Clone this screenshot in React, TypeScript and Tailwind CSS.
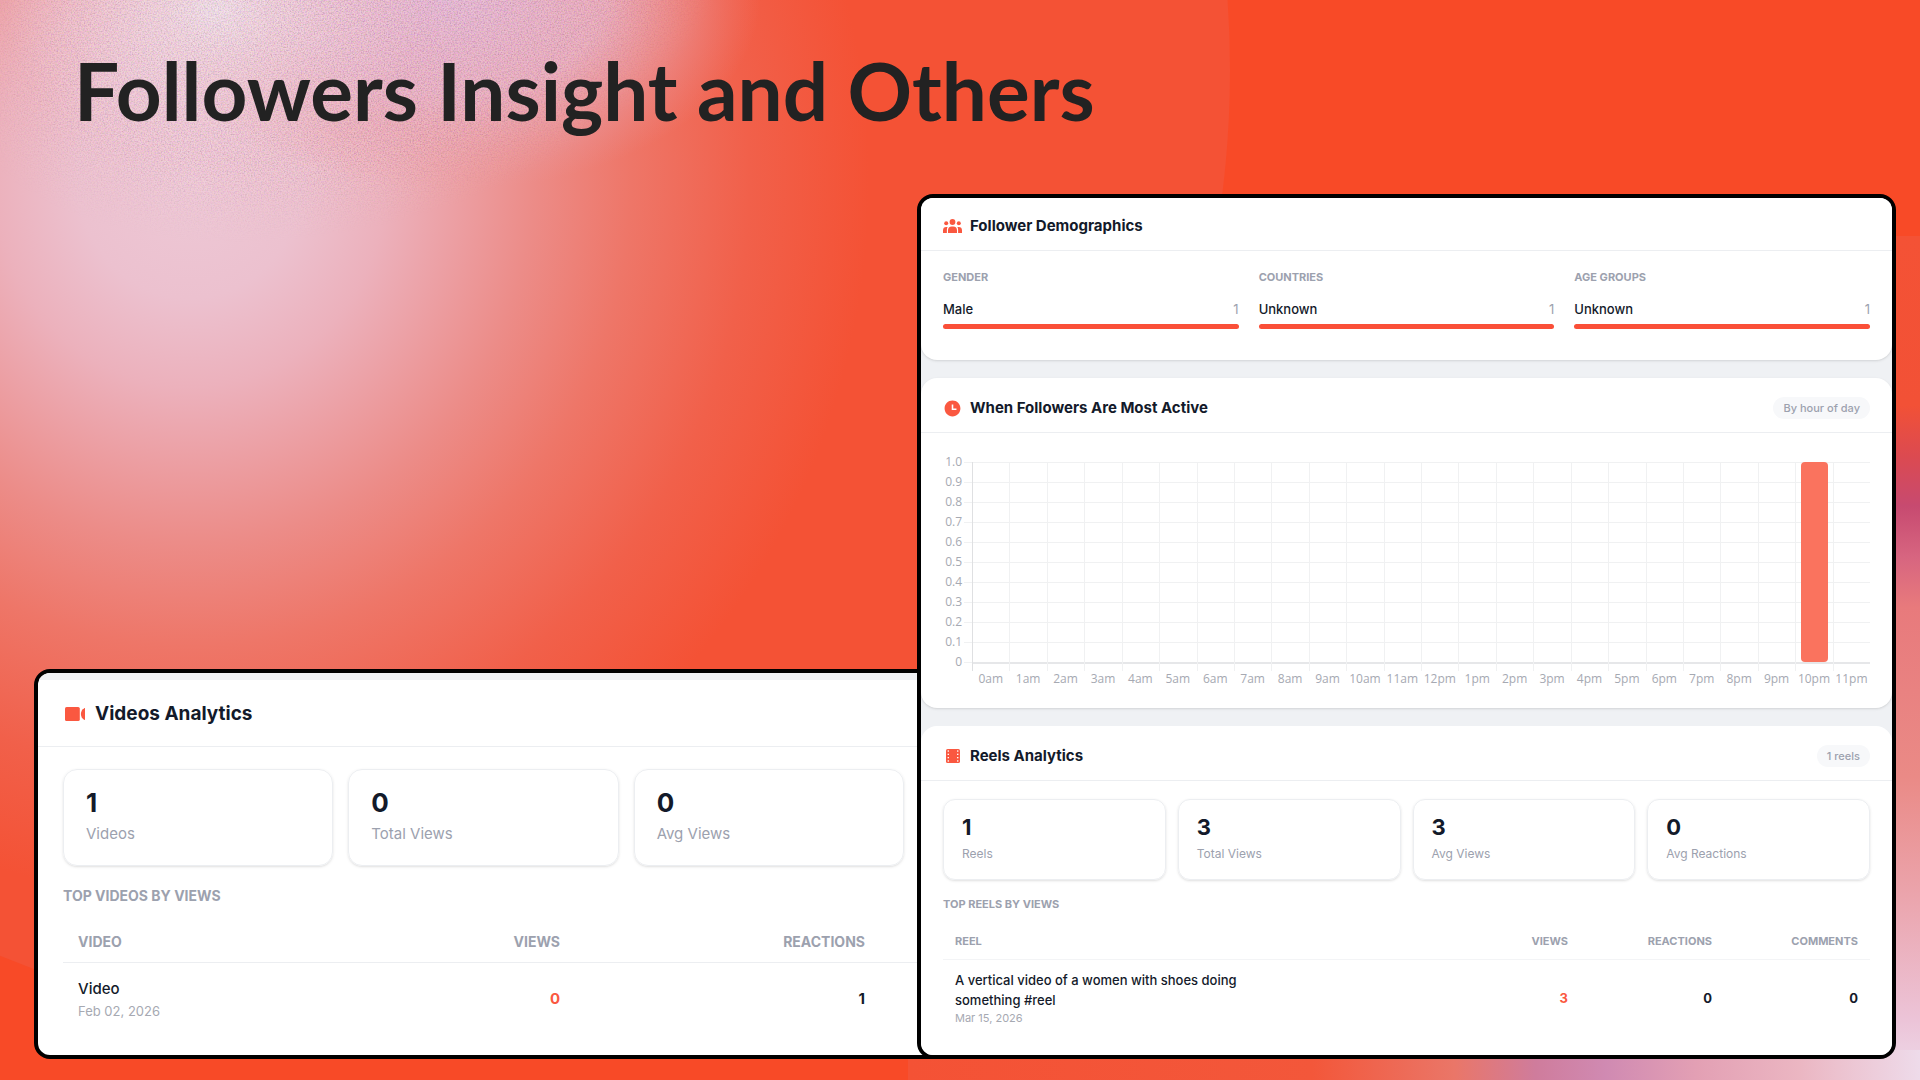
import React from 'react';
import { RiTimeFill } from 'react-icons/ri';

const hours = Array.from({ length: 24 }, (_, i) => ({
  label: i < 12 ? `${i}am` : `${i === 12 ? 12 : i - 12}pm`,
  value: i === 22 ? 1 : 0,
}));

const ticks = ['1.0', '0.9', '0.8', '0.7', '0.6', '0.5', '0.4', '0.3', '0.2', '0.1', '0'];

const demographics = [
  { title: 'Gender', label: 'Male', count: 1 },
  { title: 'Countries', label: 'Unknown', count: 1 },
  { title: 'Age Groups', label: 'Unknown', count: 1 },
];

const reelStats = [
  { value: 1, label: 'Reels' },
  { value: 3, label: 'Total Views' },
  { value: 3, label: 'Avg Views' },
  { value: 0, label: 'Avg Reactions' },
];

const videoStats = [
  { value: 1, label: 'Videos' },
  { value: 0, label: 'Total Views' },
  { value: 0, label: 'Avg Views' },
];

function TeamIcon() {
  return (
    <svg className="h-[14px] w-[19px]" viewBox="0 0 19 14" fill="currentColor" aria-hidden="true">
      <circle cx="9.5" cy="3" r="2.9" />
      <circle cx="3.2" cy="4.3" r="2" />
      <circle cx="15.8" cy="4.3" r="2" />
      <path d="M5 14v-2.8a3.8 3.8 0 0 1 3.8-3.8h1.4a3.8 3.8 0 0 1 3.8 3.8V14z" />
      <path d="M0 14v-2.6A3.4 3.4 0 0 1 3.4 8h1.2a5.6 5.6 0 0 0-.7 3.2V14z" />
      <path d="M19 14v-2.6A3.4 3.4 0 0 0 15.6 8h-1.2a5.6 5.6 0 0 1 .7 3.2V14z" />
    </svg>
  );
}

function VideoIcon() {
  return (
    <svg className="h-[14px] w-5" viewBox="0 0 20 14" fill="currentColor" aria-hidden="true">
      <rect width="14.8" height="14" rx="1.6" />
      <path d="M20 1.6v10.8c0 .5-.5.6-.9.4-1.9-1-3.2-3.2-3.2-5.8s1.3-4.8 3.2-5.8c.4-.2.9-.1.9.4z" />
    </svg>
  );
}

function FilmIcon() {
  return (
    <svg className="h-[14px] w-[14px]" viewBox="0 0 14 14" aria-hidden="true">
      <rect width="14" height="14" rx="1.6" fill="currentColor" />
      {[1.4, 4.7, 8, 11.3].map((y) => (
        <g key={y} fill="#fff">
          <rect x="1.6" y={y} width="1.4" height="1.3" />
          <rect x="11" y={y} width="1.4" height="1.3" />
        </g>
      ))}
    </svg>
  );
}

function Backdrop() {
  return (
    <svg
      className="absolute inset-0 h-full w-full"
      viewBox="0 0 1920 1080"
      preserveAspectRatio="none"
      aria-hidden="true"
    >
      <defs>
        <radialGradient id="glow" gradientUnits="userSpaceOnUse" cx="0" cy="0" r="1" gradientTransform="translate(190 180) scale(700 740)">
          <stop offset="0" stopColor="#edc8d6" />
          <stop offset="0.16" stopColor="#ecc1cf" />
          <stop offset="0.28" stopColor="#ecb1bc" />
          <stop offset="0.37" stopColor="#eca1a6" />
          <stop offset="0.49" stopColor="#ec8c88" />
          <stop offset="0.63" stopColor="#ee7668" />
          <stop offset="0.8" stopColor="#f1604a" />
          <stop offset="0.97" stopColor="#f45235" />
        </radialGradient>
        <radialGradient id="white" gradientUnits="userSpaceOnUse" cx="0" cy="0" r="1" gradientTransform="translate(215 10) scale(210 150)">
          <stop offset="0" stopColor="#eee0ea" />
          <stop offset="1" stopColor="#eed0de" stopOpacity="0" />
        </radialGradient>
        <radialGradient id="lilac" gradientUnits="userSpaceOnUse" cx="0" cy="0" r="1" gradientTransform="translate(450 0) scale(310 190)">
          <stop offset="0" stopColor="#e2b6d4" />
          <stop offset="0.5" stopColor="#e6b0c6" stopOpacity="0.85" />
          <stop offset="1" stopColor="#ea98a0" stopOpacity="0" />
        </radialGradient>
        <radialGradient id="grainFade" gradientUnits="userSpaceOnUse" cx="0" cy="0" r="1" gradientTransform="translate(340 0) rotate(-14) scale(400 230)">
          <stop offset="0" stopColor="#fff" />
          <stop offset="0.7" stopColor="#fff" stopOpacity="0.8" />
          <stop offset="1" stopColor="#fff" stopOpacity="0" />
        </radialGradient>
        <linearGradient id="side" x1="0" y1="0" x2="0" y2="1">
          <stop offset="0" stopColor="#f45235" />
          <stop offset="0.2" stopColor="#f25136" />
          <stop offset="0.26" stopColor="#dc4a50" />
          <stop offset="0.32" stopColor="#c74a70" />
          <stop offset="0.38" stopColor="#d76580" />
          <stop offset="0.44" stopColor="#e87a7c" />
          <stop offset="0.64" stopColor="#ea8a86" />
          <stop offset="0.78" stopColor="#eba4ac" />
          <stop offset="0.93" stopColor="#ecc4d8" />
          <stop offset="1" stopColor="#eedbea" />
        </linearGradient>
        <linearGradient id="floor" x1="0" y1="0" x2="1" y2="0">
          <stop offset="0" stopColor="#f45235" />
          <stop offset="0.4" stopColor="#f3573a" />
          <stop offset="0.54" stopColor="#ea7668" />
          <stop offset="0.62" stopColor="#cf7c9c" />
          <stop offset="0.69" stopColor="#d08ab2" />
          <stop offset="0.78" stopColor="#e3a0b4" />
          <stop offset="0.88" stopColor="#ebb6c2" />
          <stop offset="1" stopColor="#eedbea" />
        </linearGradient>
        <mask id="grainMask">
          <rect width="800" height="260" fill="url(#grainFade)" />
        </mask>
        <filter id="grain" x="0" y="0" width="100%" height="100%" colorInterpolationFilters="sRGB">
          <feTurbulence type="fractalNoise" baseFrequency="0.7" numOctaves="2" seed="4" />
          <feColorMatrix values="2 0 0 0 -0.1  1 1.4 0 0 -0.5  0.8 0 1.4 0 -0.35  0 0 0 0 1" />
        </filter>
      </defs>
      <rect width="1920" height="1080" fill="#f84a27" />
      <ellipse cx="330" cy="70" rx="900" ry="952" fill="#f45235" />
      <rect width="900" height="940" fill="url(#glow)" />
      <rect width="800" height="200" fill="url(#lilac)" />
      <rect width="440" height="180" fill="url(#white)" />
      <g mask="url(#grainMask)" opacity="0.2">
        <rect width="800" height="260" filter="url(#grain)" />
      </g>
      <rect x="1880" y="236" width="40" height="844" fill="url(#side)" />
      <rect x="908" y="1050" width="1012" height="30" fill="url(#floor)" />
    </svg>
  );
}

type PanelHeaderProps = {
  icon: React.ReactNode;
  title: string;
  badge?: string;
};

function PanelHeader({ icon, title, badge }: PanelHeaderProps) {
  return (
    <div className="flex items-center justify-between border-b border-[#eceef1] px-[22px] pt-[19px] pb-[13px]">
      <div className="flex items-center gap-2">
        <span className="flex w-[19px] justify-center text-[#fa5840]">{icon}</span>
        <h2 className="text-[15px] leading-[22px] font-bold text-[#131a2a]">{title}</h2>
      </div>
      {badge && (
        <span className="rounded-full bg-[#f7f8fa] px-[10px] py-[3px] text-[11px] leading-4 font-medium text-[#9ca1ae]">{badge}</span>
      )}
    </div>
  );
}

function HourChart() {
  return (
    <div className="flex px-[22px] pt-[19px]">
      <div className="flex w-[19px] flex-col text-right text-[12px] text-[#a6a9b2] font-['Open_Sans',sans-serif]">
        {ticks.map((tick) => (
          <span key={tick} className="h-5 leading-5">{tick}</span>
        ))}
      </div>
      <div className="flex flex-1 pt-[10px] pl-[2px]">
        <div className="h-[201px] w-2 bg-[repeating-linear-gradient(to_bottom,#f0f1f2_0px,#f0f1f2_1px,transparent_1px,transparent_20px)]" />
        {hours.map((hour) => (
          <div key={hour.label} className="group flex flex-1 flex-col items-center">
            <div className="h-[209px] w-full border-l border-[#f0f1f2] group-[:nth-child(2)]:border-[#dfe0e2]">
              <div className="flex h-[202px] items-end justify-center border-b-2 border-[#e6e7e9] bg-[repeating-linear-gradient(to_bottom,#f0f1f2_0px,#f0f1f2_1px,transparent_1px,transparent_20px)]">
                {hour.value > 0 && (
                  <div className="w-[27px] rounded bg-[#fa735e]" style={{ height: `${hour.value * 100}%` }} />
                )}
              </div>
            </div>
            <span className="text-[12px] leading-4 whitespace-nowrap text-[#a6a9b2] font-['Open_Sans',sans-serif]">{hour.label}</span>
          </div>
        ))}
      </div>
    </div>
  );
}

export default function App() {
  return (
    <main className="relative flex min-h-screen flex-col overflow-hidden bg-[#f84a27] font-[Inter,sans-serif]">
      <Backdrop />

      <h1 className="relative px-[74px] pt-[42px] text-[80px] leading-[96px] font-bold text-[#222222] font-[Lato,sans-serif]">
        Followers Insight and Others
      </h1>

      <div className="relative mt-auto flex items-end pt-[54px] pr-6 pb-[21px] pl-[34px]">
        {/* Videos */}
        <section className="-mr-8 min-w-0 flex-1 overflow-hidden rounded-2xl border-4 border-black bg-white">
          <div className="h-[7px] bg-[#eff1f4]" />
          <div className="flex h-[67px] items-center gap-[10px] border-b border-[#eceef1] px-[27px] pt-[2px]">
            <span className="text-[#fa5840]">
              <VideoIcon />
            </span>
            <h2 className="text-[19px] font-bold text-[#131a2a]">Videos Analytics</h2>
          </div>
          <div className="grid grid-cols-3 gap-[15px] pt-[22px] pr-[41px] pl-[25px]">
            {videoStats.map((stat) => (
              <div key={stat.label} className="rounded-[14px] border border-[#eceef1] px-[22px] pt-4 pb-[19px] shadow-sm">
                <p className="text-[26px] leading-[34px] font-bold text-[#131a2a]">{stat.value}</p>
                <p className="mt-[2px] text-[15px] leading-6 text-[#9ca1ae]">{stat.label}</p>
              </div>
            ))}
          </div>
          <h3 className="mt-5 pl-[25px] text-[14px] leading-5 font-bold text-[#9ca1ae] uppercase">Top Videos by Views</h3>
          <div className="pt-[15px] pb-5 pl-[25px]">
            <table className="w-full table-fixed text-right">
              <thead>
                <tr className="h-[41px] border-b border-[#eceef1] text-[14px] text-[#9ca1ae] uppercase">
                  <th className="pl-[15px] text-left font-bold">Video</th>
                  <th className="w-[190px] font-bold">Views</th>
                  <th className="w-[385px] pr-20 font-bold">Reactions</th>
                </tr>
              </thead>
              <tbody>
                <tr className="h-[73px] text-[15px] font-bold text-[#131a2a]">
                  <td className="pl-[15px] text-left font-medium">
                    <p className="leading-6">Video</p>
                    <p className="text-[13px] leading-5 font-normal text-[#a6a9b2]">Feb 02, 2026</p>
                  </td>
                  <td className="text-[#fa5840]">0</td>
                  <td className="pr-20">1</td>
                </tr>
              </tbody>
            </table>
          </div>
        </section>

        {/* Followers and reels */}
        <section className="relative w-[979px] shrink-0 overflow-hidden rounded-2xl border-4 border-black bg-[#eff1f4]">
          <div className="-mt-[2px] h-[164px] rounded-b-2xl bg-white shadow-sm">
            <PanelHeader icon={<TeamIcon />} title="Follower Demographics" />
            <div className="grid grid-cols-3 gap-5 px-[22px] pt-[18px]">
              {demographics.map((item) => (
                <div key={item.title}>
                  <h3 className="text-[11px] leading-4 font-bold text-[#9ca1ae] uppercase">{item.title}</h3>
                  <div className="mt-[14px] flex justify-between text-[13px] leading-5">
                    <span className="font-medium text-[#131a2a]">{item.label}</span>
                    <span className="text-[#9ca1ae]">{item.count}</span>
                  </div>
                  <div className="mt-[5px] h-[5px] rounded-full bg-[#fa4f38]" />
                </div>
              ))}
            </div>
          </div>

          <div className="mt-[18px] h-[330px] rounded-2xl bg-white shadow-sm">
            <PanelHeader icon={<RiTimeFill className="text-[19px]" />} title="When Followers Are Most Active" badge="By hour of day" />
            <HourChart />
          </div>

          <div className="mt-[18px] h-[329px] rounded-t-2xl bg-white">
            <PanelHeader icon={<FilmIcon />} title="Reels Analytics" badge="1 reels" />
            <div className="grid grid-cols-4 gap-3 px-[22px] pt-[18px]">
              {reelStats.map((stat) => (
                <div key={stat.label} className="rounded-xl border border-[#eceef1] px-[18px] pt-[13px] pb-[15px] shadow-sm">
                  <p className="text-[22px] leading-7 font-bold text-[#131a2a]">{stat.value}</p>
                  <p className="mt-[3px] text-[12px] leading-5 text-[#9ca1ae]">{stat.label}</p>
                </div>
              ))}
            </div>
            <h3 className="mt-4 px-[22px] text-[11px] leading-4 font-bold text-[#9ca1ae] uppercase">Top Reels by Views</h3>
            <div className="px-[22px] pt-3">
              <table className="w-full table-fixed text-right">
                <thead>
                  <tr className="h-[35px] border-b border-[#f3f4f6] text-[11px] text-[#9ca1ae] uppercase">
                    <th className="pl-3 text-left font-bold">Reel</th>
                    <th className="w-[120px] font-bold">Views</th>
                    <th className="w-[144px] font-bold">Reactions</th>
                    <th className="w-[158px] pr-3 font-bold">Comments</th>
                  </tr>
                </thead>
                <tbody>
                  <tr className="h-[78px] text-[13px] font-bold text-[#131a2a]">
                    <td className="pl-3 text-left font-medium">
                      <p className="w-[320px] leading-5">A vertical video of a women with shoes doing something #reel</p>
                      <p className="text-[11px] leading-4 font-normal text-[#a6a9b2]">Mar 15, 2026</p>
                    </td>
                    <td className="text-[#fa5840]">3</td>
                    <td>0</td>
                    <td className="pr-3">0</td>
                  </tr>
                </tbody>
              </table>
            </div>
          </div>
        </section>
      </div>
    </main>
  );
}
